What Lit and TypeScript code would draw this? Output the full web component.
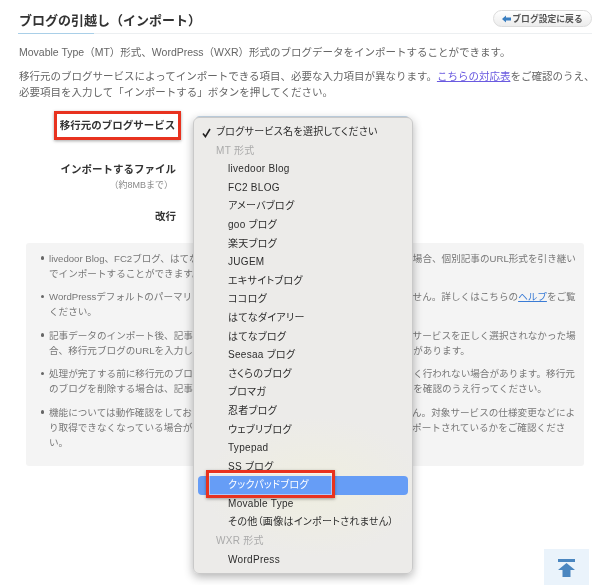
import { LitElement, html, css } from "lit";
import { customElement } from "lit/decorators.js";

const services = ["livedoor Blog","FC2 BLOG","アメーバブログ","goo ブログ","楽天ブログ","JUGEM","エキサイトブログ","ココログ","はてなダイアリー","はてなブログ","Seesaa ブログ","さくらのブログ","ブロマガ","忍者ブログ","ウェブリブログ","Typepad","SS ブログ"];

@customElement("app-root")
export class AppRoot extends LitElement {
  static styles = css`
    :host { display: block; position: relative; width: 600px; height: 585px; overflow: hidden; background: #fff; color: #666;
      font-family: "Liberation Sans", "Noto Sans CJK JP", sans-serif; font-size: 10.5px; filter: blur(0.35px); }
    .page { padding: 8px 8px 0 18px; display: flex; flex-direction: column; }
    .head { display: flex; justify-content: space-between; align-items: flex-start; height: 25px; position: relative; border-bottom: 1px solid #eceff1; }
    .head::after { content: ""; position: absolute; left: 0; bottom: -1px; width: 76px; height: 1px; background: #a9cfe8; }
    h1 { margin: 4px 0 0 1px; font-size: 13px; line-height: 18px; font-weight: 700; color: #333; }
    .back { margin-top: 2px; height: 17px; width: 99px; box-sizing: border-box; border: 1px solid #dcdcdc; border-radius: 9px; background: linear-gradient(#fff,#ececec);
      font-size: 8.8px; font-weight: 700; color: #555; display: flex; align-items: center; justify-content: center; gap: 1px; white-space: nowrap; }
    .back svg { width: 9px; height: 8px; }
    .intro { margin: 0 0 0 1px; line-height: 16.5px; white-space: nowrap; }
    .i1 { margin-top: 10px; }
    .i2 { margin-top: 7px; }
    a { color: #6a5ae0; text-decoration: underline; }
    a.help { color: #3a7bd5; }
    .form { margin-top: 13px; display: grid; grid-template-columns: 158px 233px; grid-template-rows: 43px 51px 22px; }
    .lab { font-weight: 700; color: #333; text-align: right; font-size: 10.5px; line-height: 16px; }
    .lab small { display: block; font-weight: 400; color: #888; font-size: 9px; text-align: right; padding-right: 3px; }
    .red { justify-self: end; margin-right: -5px; height: 29px; width: 127px; box-sizing: border-box; border: 3px solid #e8321f; background: #fff; box-shadow: 0 1px 3px rgba(0,0,0,.35);
      display: flex; align-items: center; justify-content: center; white-space: nowrap; font-size: 10.5px; margin-top: -3px; }
    .sel { margin: 2px 0 0 20px; height: 26px; border: 1px solid #c6d8e8; border-radius: 3px; background: #f5f5f5; }
    .l2 { padding-top: 4px; }
    .notice { margin: 13px 8px 0 8px; background: #f4f4f4; border-radius: 3px; height: 223px; box-sizing: border-box; padding: 8px 0 0 15px; }
    ul { margin: 0; padding: 0; list-style: none; }
    li { position: relative; padding-left: 8px; font-size: 9.6px; line-height: 15px; margin-bottom: 8.6px; white-space: nowrap; color: #777; }
    li::before { content: ""; position: absolute; left: -0.5px; top: 5.5px; width: 3.5px; height: 3.5px; border-radius: 50%; background: #666; }
    .menu { position: absolute; left: 193px; top: 117px; width: 220px; height: 457px; box-sizing: border-box; padding-top: 5px; border-radius: 6px; border: 1px solid #c9c9c9;
      background: radial-gradient(ellipse 110px 70px at 55% 81%, #efeee0 0%, #ecebe9 100%); box-shadow: 0 3px 10px rgba(0,0,0,.3); color: #2c2c2c; font-size: 10px;
      font-feature-settings: "palt"; letter-spacing: .3px; }
    .row { height: 18.6px; line-height: 18.6px; white-space: nowrap; padding-left: 34px; position: relative; }
    .row.top, .row.grp { padding-left: 22px; }
    .row.grp { color: #aaa; }
    .row.on { color: #fff; margin: 0 4px; padding-left: 30px; background: #669df6; border-radius: 4px; }
    .check { position: absolute; left: 8px; top: 5px; width: 9px; height: 10px; }
    .mark { position: absolute; left: 206px; top: 470px; width: 129px; height: 28px; box-sizing: border-box; border: 3px solid #e8321f; box-shadow: 0 1px 3px rgba(0,0,0,.35), inset 0 0 0 1px rgba(255,255,255,.45); }
    .totop { position: absolute; left: 544px; top: 549px; width: 45px; height: 36px; background: #eaf3fb; display: flex; align-items: center; justify-content: center; }
    .totop svg { width: 17px; height: 18px; margin-top: 1px; }
  `;

  render() {
    return html`
      <div class="page">
        <div class="head">
          <h1>ブログの引越し（インポート）</h1>
          <div class="back"><svg viewBox="0 0 9 8"><path d="M0 4 4 .5V2.6H9V5.4H4V7.5Z" fill="#3a7fc1"/></svg>ブログ設定に戻る</div>
        </div>
        <p class="intro i1">Movable Type（MT）形式、WordPress（WXR）形式のブログデータをインポートすることができます。</p>
        <p class="intro i2">移行元のブログサービスによってインポートできる項目、必要な入力項目が異なります。<a>こちらの対応表</a>をご確認のうえ、<br>必要項目を入力して「インポートする」ボタンを押してください。</p>
        <div class="form">
          <div class="lab red">移行元のブログサービス</div><div class="sel"></div>
          <div class="lab l2">インポートするファイル<small>（約8MBまで）</small></div><div></div>
          <div class="lab">改行</div><div></div>
        </div>
        <div class="notice"><ul>
          <li>livedoor Blog、FC2ブログ、はてなブログ、Seesaaブログなどからインポートをする場合、個別記事のURL形式を引き継い<br>でインポートすることができます。</li>
          <li>WordPressデフォルトのパーマリンク形式以外の記事はURLを引き継ぐことができません。詳しくはこちらの<a class="help">ヘルプ</a>をご覧<br>ください。</li>
          <li>記事データのインポート後、記事内の画像を移行先へ取り込みます。移行元のブログサービスを正しく選択されなかった場<br>合、移行元ブログのURLを入力していない場合は、画像が正しく取り込まれないことがあります。</li>
          <li>処理が完了する前に移行元のブログを削除すると、記事や画像等のインポートが正しく行われない場合があります。移行元<br>のブログを削除する場合は、記事データや画像が問題なく正しく移行されていることを確認のうえ行ってください。</li>
          <li>機能については動作確認をしておりますが、全ての動作を保証するものではありません。対象サービスの仕様変更などによ<br>り取得できなくなっている場合があります。インポート後は、全データが正しくインポートされているかをご確認くださ<br>い。</li>
        </ul></div>
      </div>
      <div class="menu">
        <div class="row top"><svg class="check" viewBox="0 0 9 10"><path d="M1 5.5 3.4 8.6 8 1" fill="none" stroke="#222" stroke-width="1.6"/></svg>ブログサービス名を選択してください</div>
        <div class="row grp">MT 形式</div>
        ${services.map((s) => html`<div class="row">${s}</div>`)}
        <div class="row on">クックパッドブログ</div>
        <div class="row">Movable Type</div>
        <div class="row">その他（画像はインポートされません）</div>
        <div class="row grp">WXR 形式</div>
        <div class="row">WordPress</div>
      </div>
      <div class="mark"></div>
      <div class="totop"><svg viewBox="0 0 17 18"><path d="M0 0H17V3H0ZM8.5 4 17 11H12.5V18H4.5V11H0Z" fill="#4a86c0"/></svg></div>
    `;
  }
}
